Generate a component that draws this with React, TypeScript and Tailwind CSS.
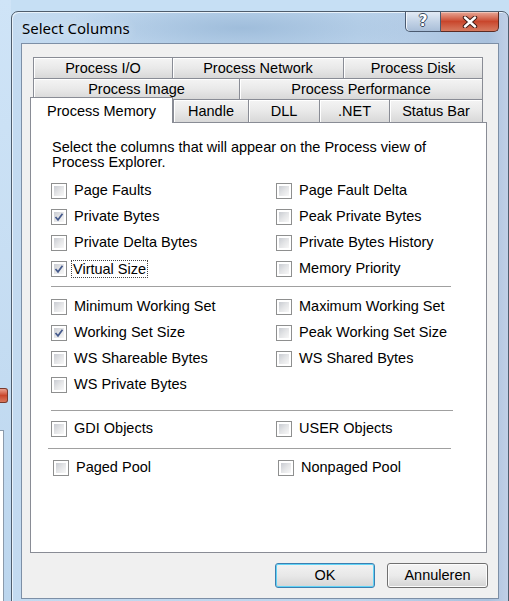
import React from 'react'

type Item = { label: string; checked?: boolean; focus?: boolean }
type Row = [Item, Item | null]

const memoryRows: Row[] = [
  [{ label: 'Page Faults' }, { label: 'Page Fault Delta' }],
  [{ label: 'Private Bytes', checked: true }, { label: 'Peak Private Bytes' }],
  [{ label: 'Private Delta Bytes' }, { label: 'Private Bytes History' }],
  [{ label: 'Virtual Size', checked: true, focus: true }, { label: 'Memory Priority' }],
]

const workingSetRows: Row[] = [
  [{ label: 'Minimum Working Set' }, { label: 'Maximum Working Set' }],
  [{ label: 'Working Set Size', checked: true }, { label: 'Peak Working Set Size' }],
  [{ label: 'WS Shareable Bytes' }, { label: 'WS Shared Bytes' }],
  [{ label: 'WS Private Bytes' }, null],
]

const objectRows: Row[] = [[{ label: 'GDI Objects' }, { label: 'USER Objects' }]]
const poolRows: Row[] = [[{ label: 'Paged Pool' }, { label: 'Nonpaged Pool' }]]

const topTabs = [
  { label: 'Process I/O', w: 'w-[139px]' },
  { label: 'Process Network', w: 'w-[171px]' },
  { label: 'Process Disk', w: 'w-[140px]' },
]
const midTabs = [
  { label: 'Process Image', w: 'w-[206px]' },
  { label: 'Process Performance', w: 'w-[244px]' },
]
const frontTabs = [
  { label: 'Handle', w: 'w-[75px]' },
  { label: 'DLL', w: 'w-[71px]' },
  { label: '.NET', w: 'w-[70px]' },
  { label: 'Status Bar', w: 'w-[94px]' },
]

function CheckBox({ checked }: { checked?: boolean }) {
  return (
    <span className="relative flex h-[16px] w-[16px] shrink-0 border border-[#8e8f8f] bg-white p-[2px]">
      <span className="h-full w-full bg-linear-to-br from-[#c9ccd2] via-[#e4e5e7] to-[#f8f8f8]" />
      {checked && (
        <svg className="absolute inset-0" viewBox="0 0 14 14" width="14" height="14">
          <path d="M3.5 7 L6 9.8 L10.5 3.8" stroke="#455a8c" strokeWidth="1.7" fill="none" />
        </svg>
      )}
    </span>
  )
}

function Option({ item }: { item: Item | null }) {
  if (!item) return <div />
  return (
    <div className="flex items-center">
      <CheckBox checked={item.checked} />
      {item.focus ? (
        <span className="ml-[4px] border border-dotted border-[#444] px-px leading-[16px]">{item.label}</span>
      ) : (
        <span className="ml-[7px]">{item.label}</span>
      )}
    </div>
  )
}

function Group({ rows, className = '' }: { rows: Row[]; className?: string }) {
  return (
    <div className={`grid grid-cols-[225px_1fr] ${className}`}>
      {rows.map(([l, r], i) => (
        <React.Fragment key={i}>
          <div className="flex h-[26px] items-center">
            <Option item={l} />
          </div>
          <div className="flex h-[26px] items-center">
            <Option item={r} />
          </div>
        </React.Fragment>
      ))}
    </div>
  )
}

function Tab({ label, w, last }: { label: string; w: string; last?: boolean }) {
  return (
    <div
      className={`flex h-full ${w} items-center justify-center border-l border-t border-[#898c95] bg-linear-to-b from-[#f4f4f4] via-[#e9e9e9] to-[#d8d8d8] pt-px shadow-[inset_1px_1px_0_#fff] ${
        last ? 'border-r' : ''
      }`}
    >
      {label}
    </div>
  )
}

export default function App() {
  return (
    <div className="relative h-[601px] w-[509px] overflow-hidden bg-[#c6dff4] font-['Liberation_Sans',Arial,sans-serif] text-[14.5px] text-black">
      {/* window behind the dialog, peeking out on the left */}
      <div className="absolute left-0 top-0 h-full w-[11px] bg-linear-to-b from-[#cfe4f7] to-[#bcd6ee]">
        <div className="absolute left-0 top-[388px] h-[15px] w-[8px] rounded-r-[3px] border border-l-0 border-[#7a3a2c] bg-linear-to-b from-[#e9a190] via-[#c9462c] to-[#d7765c]" />
        <div className="absolute left-0 top-[430px] h-full w-[4px] border-r border-t border-[#8b9aab] bg-white" />
      </div>

      {/* dialog window */}
      <div className="absolute left-[11px] top-[11px] h-[600px] w-[498px] rounded-t-[7px] border border-[#4f5d6d] bg-[radial-gradient(ellipse_180px_30px_at_230px_16px,#9fbddb,transparent),linear-gradient(to_right,#c3daf0,#bcd4ec_70%,#a9c1dd_96%,#c0cfe6)] shadow-[inset_1px_1px_0_#e8f2fb]">
        {/* caption */}
        <div className="flex h-[31px] items-start justify-between">
          <div className="pl-[10px] pt-[7px] font-['Noto_Sans',sans-serif] text-[15px] leading-[18px] text-black [text-shadow:0_0_8px_#e6f0fa]">
            Select Columns
          </div>
          <div className="mr-[9px] flex h-[20px]">
            <div className="flex w-[36px] items-center justify-center rounded-bl-[5px] border border-t-0 border-[#4a5a70] bg-linear-to-b from-[#e3ebf5] via-[#c3d3e6] to-[#a9bed8] shadow-[inset_1px_0_0_#f2f6fb]">
              <span className="font-['DejaVu_Sans',sans-serif] text-[15px] font-bold leading-none text-white [text-shadow:-1px_0_0_#3b4a60,1px_0_0_#3b4a60,0_-1px_0_#3b4a60,0_1px_0_#3b4a60]">
                ?
              </span>
            </div>
            <div className="flex w-[58px] items-center justify-center rounded-br-[5px] border border-l-0 border-t-0 border-[#5b2a22] bg-linear-to-b from-[#e6a797] via-[#c9462c] to-[#d67a60] shadow-[inset_0_1px_0_#f0c4b8]">
              <svg width="18" height="12" viewBox="0 0 18 12">
                <path d="M4 1.5 L14 10.5 M14 1.5 L4 10.5" stroke="#3e1c16" strokeWidth="4.4" strokeLinecap="round" />
                <path d="M4 1.5 L14 10.5 M14 1.5 L4 10.5" stroke="#ffffff" strokeWidth="2.4" strokeLinecap="round" />
              </svg>
            </div>
          </div>
        </div>

        {/* client area */}
        <div className="ml-[9px] flex h-[556px] w-[478px] flex-col border border-[#7d8fa6] bg-[#f0f0f0]">
          <div className="ml-[8px] mt-[13px] w-[457px]">
            {/* tab rows */}
            <div className="ml-[3px] flex h-[21px] w-[450px]">
              {topTabs.map((t, i) => (
                <Tab key={t.label} {...t} last={i === topTabs.length - 1} />
              ))}
            </div>
            <div className="ml-[3px] flex h-[21px] w-[450px]">
              {midTabs.map((t, i) => (
                <Tab key={t.label} {...t} last={i === midTabs.length - 1} />
              ))}
            </div>
            <div className="flex h-[23px] items-end">
              <div className="relative z-10 -mb-px flex h-[26px] w-[143px] items-start justify-center border border-b-0 border-[#898c95] bg-white pt-[3px]">
                Process Memory
              </div>
              <div className="flex h-[23px]">
                {frontTabs.map((t, i) => (
                  <Tab key={t.label} {...t} last={i === frontTabs.length - 1} />
                ))}
              </div>
            </div>

            {/* tab page */}
            <div className="h-[431px] border border-[#898c95] bg-white pl-[20px] pt-[17px]">
              <p className="whitespace-nowrap pl-px leading-[15px]">
                Select the columns that will appear on the Process view of
                <br />
                Process Explorer.
              </p>
              <Group rows={memoryRows} className="mt-[8px]" />
              <div className="mt-[4px] w-[400px] border-t border-[#a0a0a0]" />
              <Group rows={workingSetRows} className="mt-[7px]" />
              <div className="mt-[12px] w-[402px] border-t border-[#a0a0a0]" />
              <Group rows={objectRows} className="mt-[5px]" />
              <div className="-ml-[3px] mt-[6px] w-[403px] border-t border-[#a0a0a0]" />
              <Group rows={poolRows} className="ml-[2px] mt-[6px]" />
            </div>
          </div>

          {/* dialog buttons */}
          <div className="mr-[10px] mt-[10px] flex justify-end gap-[12px]">
            <button className="flex h-[25px] w-[100px] items-center justify-center rounded-[3px] border border-[#3c7fb1] bg-linear-to-b from-[#f2f2f2] via-[#e8e8e8] to-[#d5d5d5] shadow-[inset_0_0_0_1px_#61d3f6]">
              OK
            </button>
            <button className="flex h-[25px] w-[101px] items-center justify-center rounded-[3px] border border-[#707070] bg-linear-to-b from-[#f4f4f4] via-[#ebebeb] to-[#d3d3d3] shadow-[inset_0_0_0_1px_#fcfcfc]">
              Annuleren
            </button>
          </div>
        </div>
      </div>
    </div>
  )
}
